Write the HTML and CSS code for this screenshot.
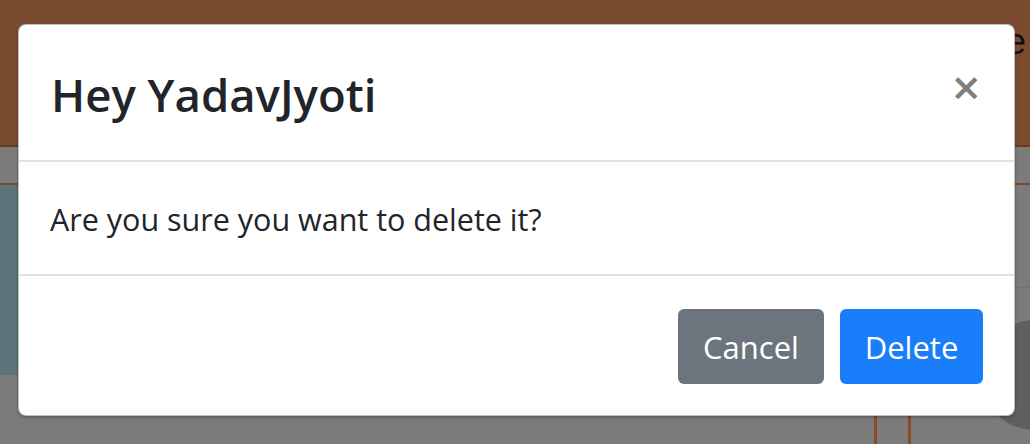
FILE: index.html
```html
<!DOCTYPE html>
<html lang="en">
<head>
<meta charset="utf-8">
<title>Delete</title>
<link rel="stylesheet" href="styles.css">
</head>
<body>
<div class="page">
  <header class="topbar"><span class="brand">e</span></header>
  <div class="strip"></div>
  <div class="content">
    <div class="side"></div>
    <div class="main">
      <div class="circle"></div>
      <div class="vline vline-a"></div>
      <div class="vline vline-b"></div>
    </div>
  </div>
</div>
<div class="modal">
  <div class="modal-header">
    <h5 class="modal-title">Hey YadavJyoti</h5>
    <button class="close" type="button" aria-label="Close">&times;</button>
  </div>
  <div class="modal-body">
    <p>Are you sure you want to delete it?</p>
  </div>
  <div class="modal-footer">
    <button class="btn btn-secondary" type="button">Cancel</button>
    <button class="btn btn-primary" type="button">Delete</button>
  </div>
</div>
</body>
</html>
```
FILE: styles.css
```css
* { box-sizing: border-box; }
html, body { margin: 0; padding: 0; }
body {
  width: 1030px;
  height: 444px;
  overflow: hidden;
  background: #7b7b7b;
  font-family: "Open Sans", "Noto Sans", "DejaVu Sans", sans-serif;
  position: relative;
}
.page { display: flex; flex-direction: column; height: 444px; overflow: hidden; }
.topbar {
  height: 147px;
  background: #7b4b30;
  border-bottom: 2px solid #683a21;
  display: flex;
  justify-content: flex-end;
  padding-top: 22px;
}
.brand {
  font-size: 36px;
  color: #111;
  line-height: 40px;
  margin-right: 4px;
  font-family: "Liberation Sans", sans-serif;
}
.strip {
  height: 38px;
  background: #7b7b7b;
  border-bottom: 2px solid #7b4b30;
}
.content { flex: 1; display: flex; }
.side { width: 60px; height: 190px; background: #5b737a; }
.main { flex: 1; position: relative; overflow: hidden; }
.main::before {
  content: "";
  position: absolute;
  left: 0; right: 0; top: 102px;
  border-top: 1px solid #727272;
}
.circle {
  position: absolute;
  right: -60px;
  top: 135px;
  width: 110px;
  height: 110px;
  border-radius: 50%;
  background: #5f5f5f;
}
.vline { position: absolute; top: 200px; bottom: 0; width: 3px; background: #8a4a2a; }
.vline-a { left: 814px; }
.vline-b { left: 848px; }

.modal {
  position: absolute;
  left: 18px;
  top: 24px;
  width: 997px;
  height: 392px;
  background: #fff;
  border: 1px solid rgba(0,0,0,.25);
  border-radius: 8px;
  box-shadow: 0 1px 3px rgba(0,0,0,.35);
  display: flex;
  flex-direction: column;
}
.modal-header {
  height: 137px;
  border-bottom: 2px solid #dee2e6;
  display: flex;
  align-items: center;
  justify-content: space-between;
  padding: 0 32px 0 32px;
}
.modal-title {
  margin: 0;
  font-size: 45.5px;
  font-weight: 600;
  color: #212529;
  line-height: 1.2;
  padding-top: 4px;
}
.close {
  border: 0;
  background: none;
  padding: 0;
  font-size: 38px;
  font-weight: 700;
  line-height: 1;
  color: #7f7f7f;
  font-family: "DejaVu Sans", sans-serif;
  margin-top: -12px;
  cursor: pointer;
}
.modal-body {
  height: 114px;
  border-bottom: 2px solid #dee2e6;
  display: flex;
  align-items: center;
  padding: 0 31px;
}
.modal-body p {
  margin: 0;
  font-size: 30.5px;
  color: #212529;
  padding-top: 2px;
}
.modal-footer {
  flex: 1;
  display: flex;
  justify-content: flex-end;
  align-items: center;
  gap: 16px;
  padding: 2px 31px 0;
}
.btn {
  height: 75px;
  border: 0;
  border-radius: 6px;
  font-family: inherit;
  font-size: 31px;
  color: #fff;
  padding: 0 20px;
}
.btn-secondary { background: #6c757d; width: 146px; }
.btn-primary { background: #1a7efb; width: 143px; }
```
